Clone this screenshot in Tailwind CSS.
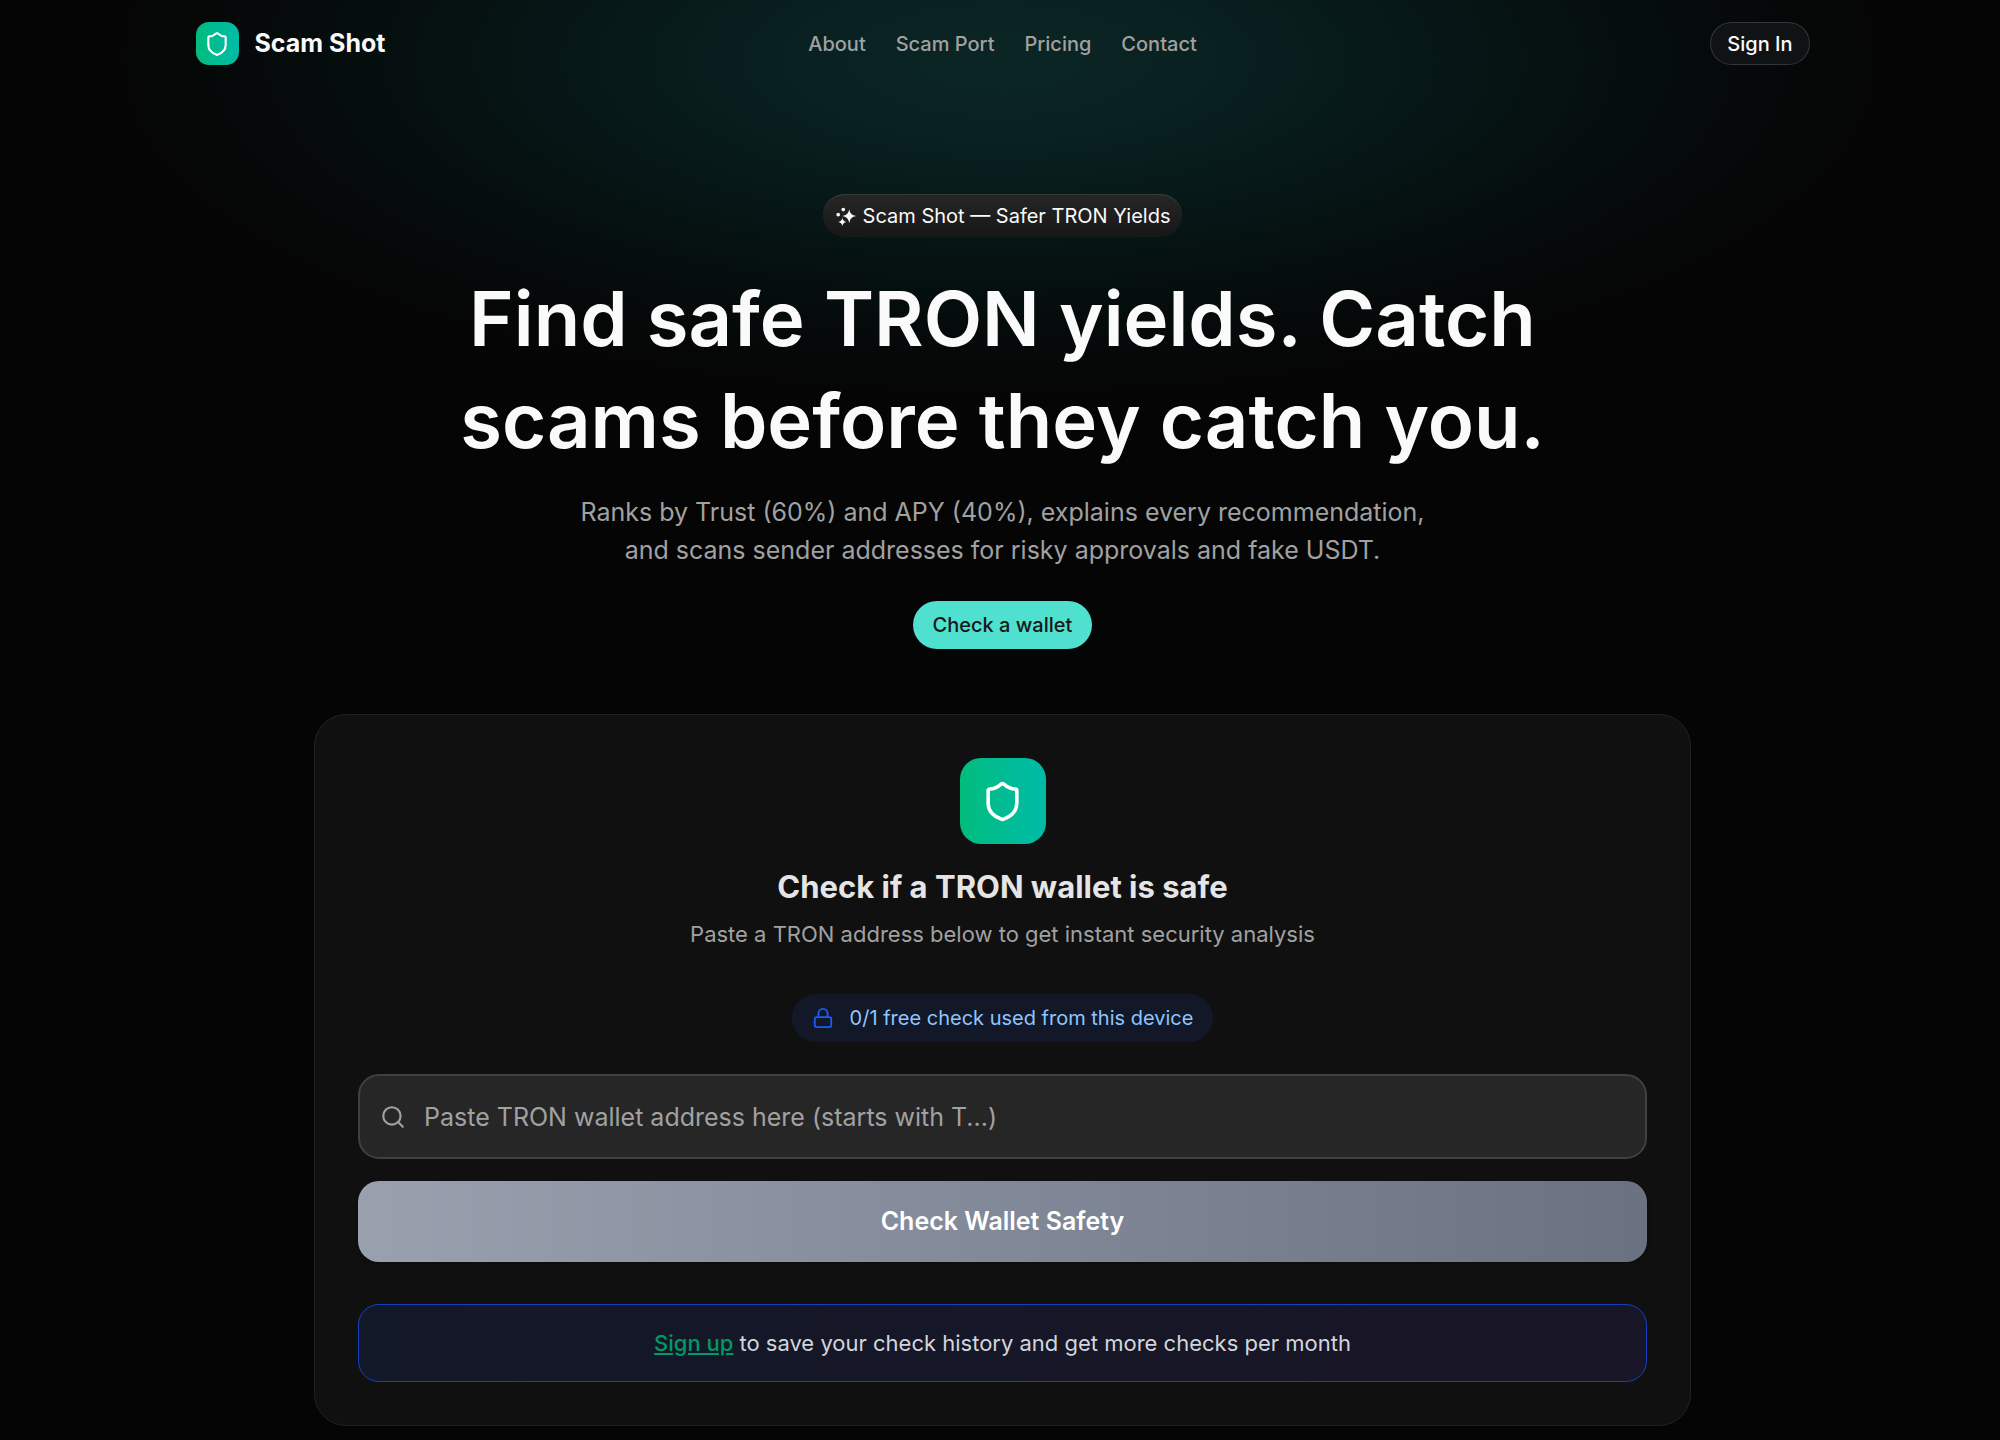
<!DOCTYPE html>
<html lang="en">
<head>
  <meta charset="UTF-8" />
  <meta name="viewport" content="width=device-width, initial-scale=1.0" />
  <title>Scam Shot | Safer TRON Yields</title>
  <script src="https://cdn.jsdelivr.net/npm/@tailwindcss/browser@4"></script>
</head>
<body class="min-h-screen bg-[#050505] bg-[radial-gradient(ellipse_900px_340px_at_50%_60px,#0b2525_0%,#092020_25%,#061414_55%,#050a0a_80%,#050505_100%)] bg-no-repeat pl-[5px] font-['Inter',sans-serif] text-neutral-50">
  <!-- Navbar -->
  <header class="mx-auto grid h-[87px] max-w-[1614px] grid-cols-[1fr_auto_1fr] items-center">
    <a href="#" class="flex items-center gap-4">
      <span class="flex size-[43px] items-center justify-center rounded-[13px] bg-linear-to-r from-[#00bc7d] to-[#00bba7]">
        <svg class="size-[26px]" viewBox="0 0 24 24" fill="none" stroke="white" stroke-width="2" stroke-linecap="round" stroke-linejoin="round"><path d="M20 13c0 5-3.5 7.5-7.66 8.95a1 1 0 0 1-.67-.01C7.5 20.5 4 18 4 13V6a1 1 0 0 1 1-1c2 0 4.5-1.2 6.24-2.72a1.17 1.17 0 0 1 1.52 0C14.51 3.81 17 5 19 5a1 1 0 0 1 1 1z" /></svg>
      </span>
      <span class="text-[25px] font-bold">Scam Shot</span>
    </a>
    <nav class="flex gap-[30px] text-[20px] font-medium text-neutral-400">
      <a href="#about">About</a>
      <a href="#port">Scam Port</a>
      <a href="#pricing">Pricing</a>
      <a href="#contact">Contact</a>
    </nav>
    <button class="h-[43px] justify-self-end rounded-full border border-white/15 bg-[#101314] px-4 text-[20px] font-medium">Sign In</button>
  </header>

  <main class="flex flex-col items-center">
    <!-- Hero -->
    <section class="flex flex-col items-center pt-[107px] text-center">
      <div class="flex h-[43px] items-center gap-[6px] rounded-full border-t border-white/15 bg-linear-to-b from-neutral-800 to-neutral-900 px-3 text-[20px]">
        <svg class="size-[22px]" viewBox="0 0 24 24" fill="currentColor"><path d="M15.5 4.5q.8 6.5 7.5 7.5-6.7 1-7.5 7.500-.8-6.500-7.500-7.500 6.700-1 7.500-7.500zM8 14q.6 4 4.500 4.500-3.900.5-4.500 4.500-.6-4-4.500-4.500 3.900-.5 4.500-4.500z" /><circle cx="9" cy="5" r="2" /><circle cx="3.500" cy="10.500" r="2" /></svg>
        <span>Scam Shot — Safer TRON Yields</span>
      </div>
      <h1 class="mt-[30px] text-[76px] leading-[102px] font-semibold">Find safe TRON yields. Catch<br />scams before they catch you.</h1>
      <p class="mt-[22px] text-[25px] leading-[38px] text-neutral-400">Ranks by Trust (60%) and APY (40%), explains every recommendation,<br />and scans sender addresses for risky approvals and fake USDT.</p>
      <button class="mt-8 h-12 rounded-full bg-[#50e0d0] px-5 text-[20px] font-medium text-neutral-900">Check a wallet</button>
    </section>

    <!-- Wallet check -->
    <section class="mt-[65px] mb-[14px] flex w-full max-w-[1377px] flex-col items-center rounded-[32px] border border-[#222222] bg-[#101010] p-[43px]">
      <span class="flex size-[86px] items-center justify-center rounded-[21px] bg-linear-to-r from-[#00bc7d] to-[#00bba7]">
        <svg class="size-[43px]" viewBox="0 0 24 24" fill="none" stroke="white" stroke-width="2" stroke-linecap="round" stroke-linejoin="round"><path d="M20 13c0 5-3.5 7.5-7.66 8.95a1 1 0 0 1-.67-.01C7.5 20.5 4 18 4 13V6a1 1 0 0 1 1-1c2 0 4.5-1.2 6.24-2.72a1.17 1.17 0 0 1 1.52 0C14.51 3.81 17 5 19 5a1 1 0 0 1 1 1z" /></svg>
      </span>
      <h2 class="mt-[21px] text-[31px] leading-[43px] font-bold text-neutral-200">Check if a TRON wallet is safe</h2>
      <p class="mt-[10px] text-[22px] leading-[32px] text-neutral-400">Paste a TRON address below to get instant security analysis</p>

      <div class="mt-11 flex h-12 items-center gap-4 rounded-full bg-[#131828] px-5 text-[20px] text-[#8ec5ff]">
        <svg class="size-[22px]" viewBox="0 0 24 24" fill="none" stroke="#155dfc" stroke-width="2" stroke-linecap="round" stroke-linejoin="round"><rect x="3" y="11" width="18" height="11" rx="2" /><path d="M7 11V7a5 5 0 0 1 10 0v4" /></svg>
        <span>0/1 free check used from this device</span>
      </div>

      <form class="mt-8 flex w-full flex-col gap-[22px]">
        <label class="flex h-[85px] items-center gap-[18px] rounded-[21px] border-2 border-neutral-700 bg-neutral-800 px-5">
          <svg class="size-[26px] text-neutral-400" viewBox="0 0 24 24" fill="none" stroke="currentColor" stroke-width="2" stroke-linecap="round" stroke-linejoin="round"><circle cx="11" cy="11" r="8" /><path d="m21 21-4.3-4.3" /></svg>
          <input type="text" aria-label="TRON wallet address" placeholder="Paste TRON wallet address here (starts with T...)" class="h-full flex-1 bg-transparent text-[25px] outline-none placeholder:text-neutral-400" />
        </label>
        <button type="button" class="h-[81px] rounded-[21px] bg-linear-to-r from-[#99a1af] to-[#6a7282] text-[25px] font-semibold text-white shadow-md">Check Wallet Safety</button>
      </form>

      <p class="mt-[42px] flex h-[78px] w-full items-center justify-center gap-[6px] rounded-[21px] border border-[#163fc4] bg-linear-to-r from-[#131828] to-[#181526] text-[22px] text-[#d1d5dc]">
        <a href="#signup" class="font-medium text-[#009966] underline">Sign up</a>
        <span>to save your check history and get more checks per month</span>
      </p>
    </section>
  </main>
</body>
</html>
